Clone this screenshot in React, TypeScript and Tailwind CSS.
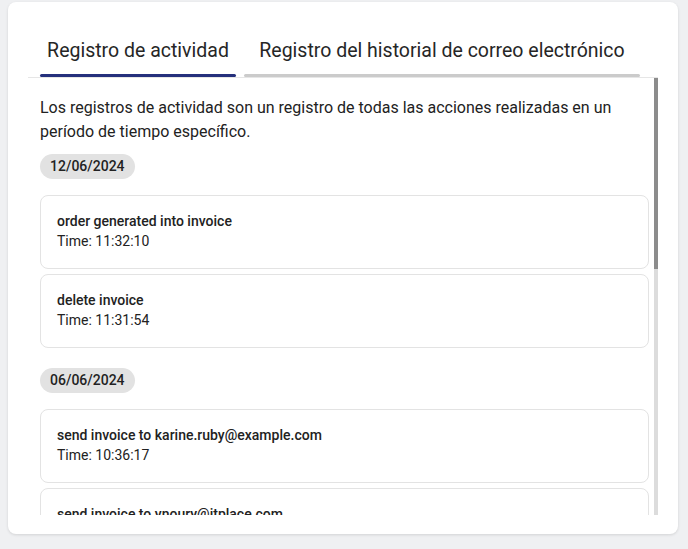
import React from "react";

type LogEntry = {
  action: string;
  time: string;
};

type LogGroup = {
  date: string;
  entries: LogEntry[];
};

const LOG_GROUPS: LogGroup[] = [
  {
    date: "12/06/2024",
    entries: [
      { action: "order generated into invoice", time: "11:32:10" },
      { action: "delete invoice", time: "11:31:54" },
    ],
  },
  {
    date: "06/06/2024",
    entries: [
      { action: "send invoice to karine.ruby@example.com", time: "10:36:17" },
      { action: "send invoice to ynoury@itplace.com", time: "10:35:02" },
    ],
  },
];

function Tab({ label, active, width }: { label: string; active: boolean; width: string }) {
  return (
    <button
      type="button"
      className={`flex h-[49px] ${width} flex-col items-center justify-between pt-[9px] text-[19.5px] leading-[28px] text-[#262626]`}
    >
      <span>{label}</span>
      <span className={`h-[3px] w-full rounded-full ${active ? "bg-[#25307c]" : "bg-[#cbcbcb]"}`} />
    </button>
  );
}

function EntryCard({ entry }: { entry: LogEntry }) {
  return (
    <div className="h-[74px] shrink-0 rounded-lg border border-[#e3e3e3] px-4 pt-[15px] text-sm leading-5 text-[#222]">
      <div className="font-medium">{entry.action}</div>
      <div>Time: {entry.time}</div>
    </div>
  );
}

export default function App() {
  return (
    <div className="min-h-screen bg-[#eff0f2] px-2 pt-[2px] font-['Roboto',sans-serif]">
      <div className="h-[532px] w-[670px] rounded-lg bg-white pl-5 pt-[26px] shadow-[0_1px_3px_rgba(0,0,0,0.12)]">
        <div className="w-[630px]">
          <div className="flex gap-2 border-b border-[#e6e6e6] pl-3">
            <Tab label="Registro de actividad" active width="w-[196px]" />
            <Tab label="Registro del historial de correo electrónico" active={false} width="w-[396px]" />
          </div>

          <div className="flex h-[437px]">
            <div className="flex flex-1 flex-col overflow-hidden pl-3 pr-[5px] pt-[18px]">
              <p className="text-base leading-6 text-[#222]">
                Los registros de actividad son un registro de todas las acciones realizadas en un período de tiempo específico.
              </p>

              {LOG_GROUPS.map((group, i) => (
                <div key={group.date} className={`flex flex-col ${i === 0 ? "mt-[10px]" : "mt-5"}`}>
                  <span className="w-fit rounded-full bg-[#e2e2e2] px-[10px] text-sm font-medium leading-[25px] text-[#222]">
                    {group.date}
                  </span>
                  <div className="mt-4 flex flex-col gap-[5px]">
                    {group.entries.map((entry) => (
                      <EntryCard key={entry.action} entry={entry} />
                    ))}
                  </div>
                </div>
              ))}
            </div>

            <div className="flex w-1 flex-col bg-[#dcdcdc]">
              <div className="h-[191px] bg-[#8c8c8c]" />
            </div>
          </div>
        </div>
      </div>
    </div>
  );
}
